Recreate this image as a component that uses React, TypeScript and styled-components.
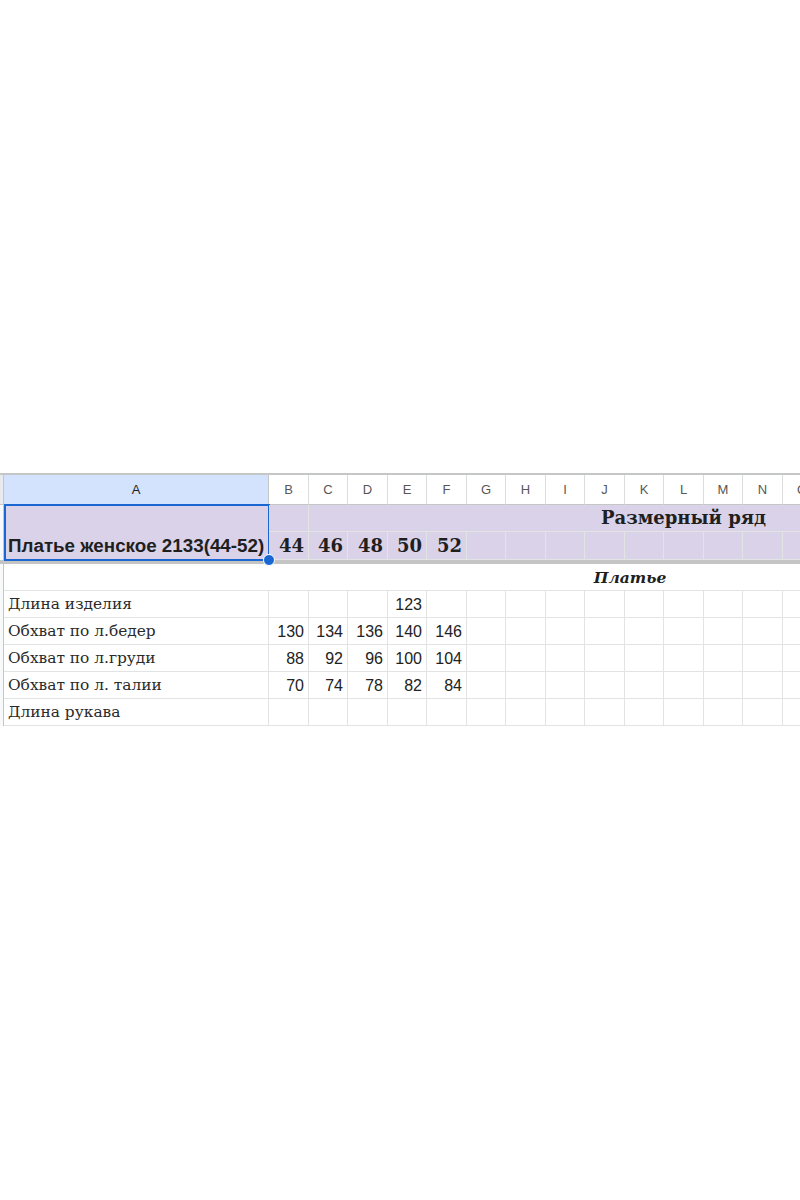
import React from "react";
import styled, { createGlobalStyle } from "styled-components";

const GlobalStyle = createGlobalStyle`
  html, body { margin: 0; padding: 0; background: #ffffff; overflow: hidden; }
  body { font-family: "Liberation Sans", Arial, sans-serif; }
`;

const LETTERS = "ABCDEFGHIJKLMNOPQRSTUVWXYZ".split("");
const COL_WIDTHS = [265, ...Array.from({ length: 25 }, (_, i) => (i % 2 === 0 ? 40 : 39))];
const TEMPLATE_COLUMNS = `4px ${COL_WIDTHS.map((w) => `${w}px`).join(" ")}`;
const TOTAL_COLS = COL_WIDTHS.length + 1;

const PURPLE = "#d9d2e9";
const GRID = "#e2e3e3";

const Page = styled.div`
  width: 800px;
  height: 1200px;
  overflow: hidden;
  padding-top: 473px;
  box-sizing: border-box;
`;

const Sheet = styled.div`
  display: grid;
  grid-template-columns: ${TEMPLATE_COLUMNS};
  grid-template-rows: 30px 27px 28px 4px 27px 27px 27px 27px 27px 27px;
  border-top: 2px solid #c4c7c5;
  width: max-content;
`;

const Corner = styled.div`
  background: #e8eaed;
  border-right: 1px solid #c4c7c5;
  border-bottom: 1px solid #c4c7c5;
  box-sizing: border-box;
`;

const RowHead = styled.div<{ $span?: number }>`
  grid-row: span ${(p) => p.$span ?? 1};
  background: #f8f9fa;
  border-right: 1px solid #c4c7c5;
  box-sizing: border-box;
`;

const HeaderCell = styled.div<{ $selected?: boolean }>`
  display: flex;
  align-items: center;
  justify-content: center;
  box-sizing: border-box;
  border-right: 1px solid ${(p) => (p.$selected ? "#c4c7c5" : "#dadce0")};
  border-bottom: 1px solid #c4c7c5;
  background: ${(p) => (p.$selected ? "#d3e3fd" : "#ffffff")};
  color: ${(p) => (p.$selected ? "#1f1f1f" : "#575757")};
  font-family: "Liberation Sans", Arial, sans-serif;
  font-size: 13px;
  font-weight: ${(p) => (p.$selected ? 500 : 400)};
`;

type Align = "left" | "right" | "center";

const Cell = styled.div<{
  $bg?: string;
  $align?: Align;
  $colSpan?: number;
  $rowSpan?: number;
}>`
  position: relative;
  grid-column: span ${(p) => p.$colSpan ?? 1};
  grid-row: span ${(p) => p.$rowSpan ?? 1};
  display: flex;
  align-items: flex-end;
  justify-content: ${(p) =>
    p.$align === "right" ? "flex-end" : p.$align === "center" ? "center" : "flex-start"};
  box-sizing: border-box;
  padding: 0 4px 3px 4px;
  background: ${(p) => p.$bg ?? "#ffffff"};
  border-right: 1px solid ${GRID};
  border-bottom: 1px solid ${GRID};
  white-space: nowrap;
  color: #1f1f1f;
`;

const TitleText = styled.span`
  font-family: "Liberation Sans", Arial, sans-serif;
  font-weight: 700;
  font-size: 18.8px;
  line-height: 20px;
`;

const SizeNumber = styled.span`
  font-family: "DejaVu Serif", "Liberation Serif", serif;
  font-weight: 700;
  font-size: 18px;
  line-height: 20px;
`;

const BandTitle = styled.span`
  font-family: "DejaVu Serif", "Liberation Serif", serif;
  font-weight: 700;
  font-size: 18px;
  line-height: 21px;
`;

const SectionTitle = styled.span`
  font-family: "DejaVu Serif", "Liberation Serif", serif;
  font-weight: 700;
  font-style: italic;
  font-size: 15.5px;
  line-height: 19px;
`;

const Label = styled.span`
  font-family: "DejaVu Serif", "Liberation Serif", serif;
  font-size: 15.4px;
  line-height: 19px;
  color: #2a2a2a;
`;

const Value = styled.span`
  font-family: "Liberation Sans", Arial, sans-serif;
  font-size: 16px;
  line-height: 19px;
  color: #222222;
`;

const FreezeBar = styled.div`
  grid-column: span ${TOTAL_COLS};
  background: #c4c4c4;
`;

const Selection = styled.div`
  position: absolute;
  inset: -1px -2px -2px 0;
  border: 2px solid #1a66d2;
  pointer-events: none;
`;

const Handle = styled.div`
  position: absolute;
  right: -7px;
  bottom: -7px;
  width: 10px;
  height: 10px;
  border-radius: 50%;
  background: #1a66d2;
  border: 1px solid #ffffff;
  z-index: 2;
`;

const sizes = ["44", "46", "48", "50", "52"];

const rows: { label: string; values: (string | null)[] }[] = [
  { label: "Длина изделия", values: [null, null, null, "123", null] },
  { label: "Обхват по л.бедер", values: ["130", "134", "136", "140", "146"] },
  { label: "Обхват по л.груди", values: ["88", "92", "96", "100", "104"] },
  { label: "Обхват по л. талии", values: ["70", "74", "78", "82", "84"] },
  { label: "Длина рукава", values: [null, null, null, null, null] },
];

const BAND_SPAN = 19; // C..U
const AFTER_BAND = COL_WIDTHS.length - 2 - BAND_SPAN; // V..Z
const EMPTY_AFTER_F = COL_WIDTHS.length - 6; // G..Z

export default function App() {
  return (
    <>
      <GlobalStyle />
      <Page>
        <Sheet>
          {/* column headers */}
          <Corner />
          {LETTERS.map((l, i) => (
            <HeaderCell key={l} $selected={i === 0}>
              {l}
            </HeaderCell>
          ))}

          {/* row 1 */}
          <RowHead $span={2} />
          <Cell $bg={PURPLE} $rowSpan={2}>
            <TitleText>Платье женское 2133(44-52)</TitleText>
            <Selection />
            <Handle />
          </Cell>
          <Cell $bg={PURPLE} />
          <Cell $bg={PURPLE} $colSpan={BAND_SPAN} $align="center">
            <BandTitle>Размерный ряд</BandTitle>
          </Cell>
          {Array.from({ length: AFTER_BAND }, (_, i) => (
            <Cell key={`r1e${i}`} $bg={PURPLE} />
          ))}

          {/* row 2 */}
          {sizes.map((s) => (
            <Cell key={s} $bg={PURPLE} $align="right">
              <SizeNumber>{s}</SizeNumber>
            </Cell>
          ))}
          {Array.from({ length: EMPTY_AFTER_F }, (_, i) => (
            <Cell key={`r2e${i}`} $bg={PURPLE} />
          ))}

          <FreezeBar />

          {/* row 3 */}
          <RowHead />
          <Cell $colSpan={26} $align="center">
            <SectionTitle>Платье</SectionTitle>
          </Cell>

          {rows.map((r) => (
            <React.Fragment key={r.label}>
              <RowHead />
              <Cell>
                <Label>{r.label}</Label>
              </Cell>
              {r.values.map((v, i) => (
                <Cell key={i} $align="right">
                  {v && <Value>{v}</Value>}
                </Cell>
              ))}
              {Array.from({ length: EMPTY_AFTER_F }, (_, i) => (
                <Cell key={`e${i}`} />
              ))}
            </React.Fragment>
          ))}
        </Sheet>
      </Page>
    </>
  );
}
